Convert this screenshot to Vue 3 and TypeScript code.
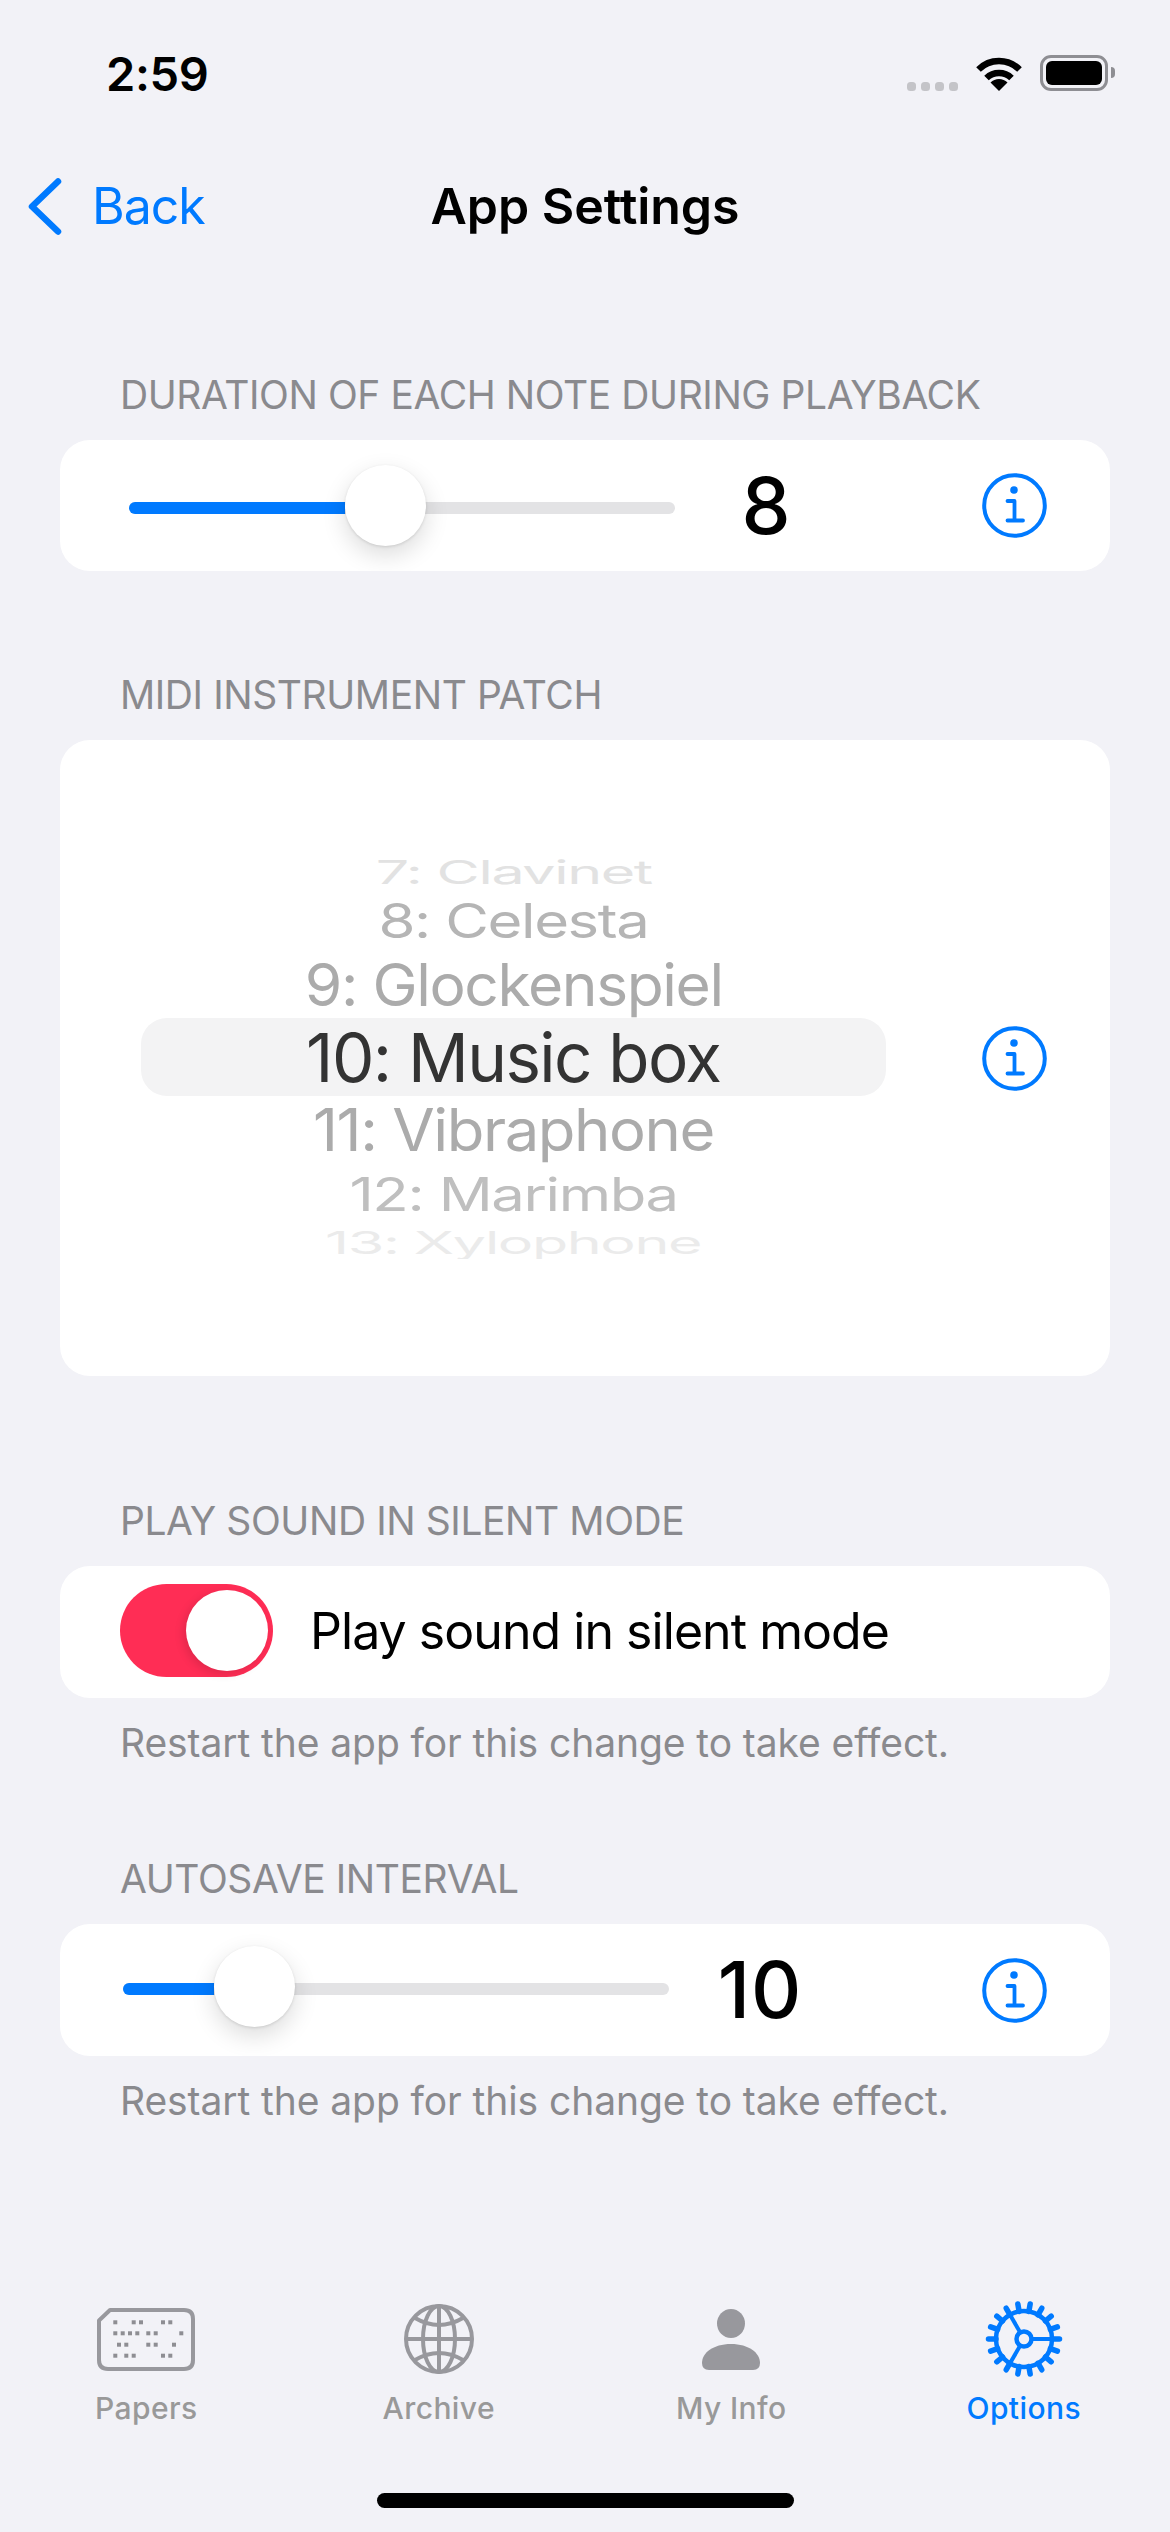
<script setup lang="ts">
interface PickerRow { label: string; sx: number; sy: number; color: string; h: number; sel?: boolean; clip?: boolean }
const rows: PickerRow[] = [
  { label: '6: Harpsichord', sx: 0.87, sy: 0.4, color: '#efefef', h: 9, clip: true },
  { label: '7: Clavinet', sx: 0.87, sy: 0.48, color: '#e2e2e2', h: 37 },
  { label: '8: Celesta', sx: 0.88, sy: 0.7, color: '#b5b5b5', h: 60 },
  { label: '9: Glockenspiel', sx: 0.89, sy: 0.86, color: '#ababab', h: 68 },
  { label: '10: Music box', sx: 0.99, sy: 1, color: '#333333', h: 78, sel: true },
  { label: '11: Vibraphone', sx: 0.905, sy: 0.86, color: '#ababab', h: 68 },
  { label: '12: Marimba', sx: 0.88, sy: 0.68, color: '#bfbfbf', h: 60 },
  { label: '13: Xylophone', sx: 0.87, sy: 0.46, color: '#ebebeb', h: 35 },
]
const paperDots: [number, number][] = [
  ...[18.3, 36.7, 44, 66, 73.3].map((x): [number, number] => [x, 14.3]),
  ...[18.3, 25.7, 33, 40.3, 51.3, 58.7, 84.3].map((x): [number, number] => [x, 25.3]),
  ...[22, 29.3, 51.3, 58.7, 77].map((x): [number, number] => [x, 36.7]),
  ...[18.3, 29.3, 36.7, 66, 73.3].map((x): [number, number] => [x, 47.7]),
]
const teeth = Array.from({ length: 18 }, (_, i) => i * 20)
</script>

<template>
  <div class="screen">
    <div class="status">
      <span class="time">2:59</span>
      <div class="status-right">
        <div class="signal"><i></i><i></i><i></i><i></i></div>
        <svg class="wifi" width="48" height="36" viewBox="0 0 48 36">
          <path d="M3.5 14.5A29 29 0 0 1 44.500 14.500" fill="none" stroke="#000" stroke-width="6.500" />
          <path d="M11.500 23A18 18 0 0 1 36.500 23" fill="none" stroke="#000" stroke-width="6.500" />
          <path d="M24 36L15.500 27.500A12 12 0 0 1 32.500 27.500Z" fill="#000" />
        </svg>
        <div class="battery"><div class="battery-fill"></div></div>
        <div class="battery-nub"></div>
      </div>
    </div>

    <div class="nav">
      <div class="back">
        <svg width="36" height="57" viewBox="0 0 36 57">
          <path d="M31 3.500L5 28.500L31 53.500" fill="none" stroke="#007aff" stroke-width="6.500" stroke-linecap="round" stroke-linejoin="round" />
        </svg>
        <span>Back</span>
      </div>
      <div class="title">App Settings</div>
    </div>

    <div class="label first">DURATION OF EACH NOTE DURING PLAYBACK</div>
    <div class="card slider-card one">
      <div class="slider">
        <div class="track"></div>
        <div class="fill" style="width: 216px"></div>
        <div class="thumb" style="left: 216px"></div>
      </div>
      <div class="value">8</div>
      <svg class="info" width="65" height="65" viewBox="0 0 65 65">
        <circle cx="32.500" cy="32.500" r="30.300" fill="none" stroke="#007aff" stroke-width="4" />
        <circle cx="32" cy="17" r="3.800" fill="#007aff" />
        <path d="M25.500 28H32.500V47.500M25.500 47.500H41" fill="none" stroke="#007aff" stroke-width="3.800" stroke-linecap="round" stroke-linejoin="round" />
      </svg>
    </div>

    <div class="label gap-a">MIDI INSTRUMENT PATCH</div>
    <div class="card picker-card">
      <div class="picker">
        <div
          v-for="r in rows"
          :key="r.label"
          class="row"
          :class="{ sel: r.sel, clip: r.clip }"
          :style="{ height: r.h + 'px' }"
        >
          <span :style="{ color: r.color, transform: `scale(${r.sx}, ${r.sy})` }">{{ r.label }}</span>
        </div>
      </div>
      <svg class="info" width="65" height="65" viewBox="0 0 65 65">
        <circle cx="32.500" cy="32.500" r="30.300" fill="none" stroke="#007aff" stroke-width="4" />
        <circle cx="32" cy="17" r="3.800" fill="#007aff" />
        <path d="M25.500 28H32.500V47.500M25.500 47.500H41" fill="none" stroke="#007aff" stroke-width="3.800" stroke-linecap="round" stroke-linejoin="round" />
      </svg>
    </div>

    <div class="label gap-b">PLAY SOUND IN SILENT MODE</div>
    <div class="card toggle-card">
      <div class="toggle"><div class="knob"></div></div>
      <span class="toggle-text">Play sound in silent mode</span>
    </div>
    <div class="footnote">Restart the app for this change to take effect.</div>

    <div class="label gap-c">AUTOSAVE INTERVAL</div>
    <div class="card slider-card two">
      <div class="slider">
        <div class="track"></div>
        <div class="fill" style="width: 91px"></div>
        <div class="thumb" style="left: 91px"></div>
      </div>
      <div class="value">10</div>
      <svg class="info" width="65" height="65" viewBox="0 0 65 65">
        <circle cx="32.500" cy="32.500" r="30.300" fill="none" stroke="#007aff" stroke-width="4" />
        <circle cx="32" cy="17" r="3.800" fill="#007aff" />
        <path d="M25.500 28H32.500V47.500M25.500 47.500H41" fill="none" stroke="#007aff" stroke-width="3.800" stroke-linecap="round" stroke-linejoin="round" />
      </svg>
    </div>
    <div class="footnote">Restart the app for this change to take effect.</div>

    <div class="tabs">
      <div class="tab">
        <div class="tab-icon">
          <svg width="98" height="63" viewBox="0 0 98 63">
            <path d="M13 2H87Q96 2 96 11V52Q96 61 87 61H11Q2 61 2 52V12.500Z" fill="none" stroke="#98989d" stroke-width="4" stroke-linejoin="round" />
            <rect v-for="(d, i) in paperDots" :key="i" :x="d[0] - 2" :y="d[1] - 2" width="4" height="4" fill="#8e8e93" />
          </svg>
        </div>
        <span class="tab-label">Papers</span>
      </div>
      <div class="tab">
        <div class="tab-icon">
          <svg width="70" height="70" viewBox="-35 -35 70 70" fill="none" stroke="#98989d" stroke-width="4">
            <circle r="33" />
            <ellipse rx="16" ry="33" />
            <path d="M0 -33V33M-33 0H33" />
            <path d="M-24 -21Q0 -7 24 -21M-24 21Q0 7 24 21" />
          </svg>
        </div>
        <span class="tab-label">Archive</span>
      </div>
      <div class="tab">
        <div class="tab-icon">
          <svg width="58" height="61" viewBox="0 0 58 61" fill="#98989d">
            <ellipse cx="29" cy="14.500" rx="14" ry="14.500" />
            <path d="M0 54C0 44 11 35 29 35C47 35 58 44 58 54Q58 61 51 61H7Q0 61 0 54Z" />
          </svg>
        </div>
        <span class="tab-label">My Info</span>
      </div>
      <div class="tab active">
        <div class="tab-icon">
          <svg width="78" height="78" viewBox="-39 -39 78 78" fill="none" stroke="#007aff">
            <circle r="28" stroke-width="4.500" />
            <line v-for="a in teeth" :key="a" x1="28" y1="0" x2="35.500" y2="0" stroke-width="5.500" stroke-linecap="round" :transform="`rotate(${a})`" />
            <circle r="7.500" stroke-width="4.500" />
            <line v-for="a in [0, 120, 240]" :key="'s' + a" x1="9" y1="0" x2="28" y2="0" stroke-width="4" :transform="`rotate(${a})`" />
          </svg>
        </div>
        <span class="tab-label">Options</span>
      </div>
    </div>
    <div class="home"></div>
  </div>
</template>

<style>
html, body { margin: 0; background: #f2f2f7; }
</style>

<style scoped>
.screen {
  width: 1170px;
  height: 2532px;
  background: #f2f2f7;
  display: flex;
  flex-direction: column;
  font-family: Inter, "Liberation Sans", sans-serif;
  overflow: hidden;
  color: #000;
}
.status {
  height: 150px;
  box-sizing: border-box;
  padding: 48px 55px 0 106px;
  display: flex;
  justify-content: space-between;
  align-items: flex-start;
}
.time { font-size: 47px; font-weight: 600; line-height: 52px; letter-spacing: -0.4px; }
.status-right { display: flex; align-items: flex-start; padding-top: 7px; }
.signal { display: flex; gap: 5px; margin-top: 27px; margin-right: 17px; }
.signal i { width: 9px; height: 9px; border-radius: 3.500px; background: #c4c4c8; display: block; }
.battery {
  width: 68px;
  height: 36px;
  margin-left: 17px;
  box-sizing: border-box;
  border: 3.500px solid #8e8e93;
  border-radius: 11px;
  padding: 3px;
}
.battery-fill { width: 100%; height: 100%; background: #000; border-radius: 6px; }
.battery-nub { width: 4px; height: 11px; margin: 12px 0 0 3px; background: #8e8e93; border-radius: 0 4px 4px 0; }
.nav { height: 70px; margin-top: 21px; position: relative; display: flex; align-items: center; justify-content: center; flex: none; }
.back { position: absolute; left: 27px; top: 7px; display: flex; align-items: center; gap: 29px; color: #007aff; font-size: 50px; line-height: 57px; letter-spacing: -1px; }
.title { font-size: 50px; font-weight: 600; line-height: 70px; letter-spacing: -0.05px; }
.label { font-size: 39px; line-height: 48px; color: #8a8a8e; padding-left: 120px; margin-bottom: 21px; white-space: nowrap; letter-spacing: -0.42px; flex: none; }
.first { margin-top: 130px; }
.gap-a { margin-top: 100px; }
.gap-b { margin-top: 121px; }
.gap-c { margin-top: 88px; }
.card {
  margin: 0 60px;
  width: 1050px;
  background: #fff;
  border-radius: 30px;
  overflow: hidden;
  display: flex;
  align-items: center;
  box-sizing: border-box;
  flex: none;
}
.slider-card { height: 131px; }
.slider-card.one { padding-left: 69px; }
.slider-card.two { padding-left: 63px; height: 132px; }
.slider { position: relative; width: 546px; height: 81px; flex: none; }
.two .slider { top: -3.500px; }
.track { position: absolute; left: 0; right: 0; top: 37px; height: 12px; background: #e3e3e5; border-radius: 6px; }
.fill { position: absolute; left: 0; top: 37px; height: 12px; background: #007aff; border-radius: 6px 0 0 6px; }
.thumb {
  position: absolute;
  top: 0;
  width: 81px;
  height: 81px;
  border-radius: 50%;
  background: #fff;
  box-shadow: 0 9px 24px rgba(0, 0, 0, 0.14), 0 1px 3px rgba(0, 0, 0, 0.12);
}
.value { width: 176px; text-align: center; font-size: 78px; line-height: 80px; font-weight: 450; flex: none; }
.one .value { padding-left: 6px; box-sizing: border-box; }
.two .value { width: 182px; letter-spacing: 1px; }
.info { flex: none; margin-left: auto; margin-right: 63px; }
.picker-card { height: 636px; padding-left: 81px; }
.picker { width: 745px; height: 415px; margin-bottom: 13px; display: flex; flex-direction: column; overflow: hidden; flex: none; }
.row { display: flex; justify-content: center; align-items: center; font-size: 68px; letter-spacing: -1.6px; flex: none; }
.row span { display: inline-block; line-height: 78px; white-space: nowrap; }
.row.sel { background: #f3f3f4; border-radius: 26px; }
.row.clip { overflow: hidden; align-items: flex-end; }
.toggle-card { height: 132px; padding-left: 60px; }
.toggle { width: 153px; height: 93px; border-radius: 47px; background: #ff2d55; position: relative; flex: none; margin-bottom: 3px; }
.knob { position: absolute; right: 5px; top: 6px; width: 82px; height: 81px; border-radius: 50%; background: #fff; box-shadow: -3px 3px 10px rgba(0, 0, 0, 0.12); }
.toggle-text { margin-left: 37px; font-size: 50px; line-height: 60px; letter-spacing: -0.95px; margin-bottom: 2px; }
.footnote { font-size: 39px; line-height: 48px; color: #8a8a8e; padding-left: 120px; margin-top: 21px; white-space: nowrap; letter-spacing: -0.08px; flex: none; }
.tabs { margin-top: auto; display: flex; flex: none; }
.tab { width: 292.500px; display: flex; flex-direction: column; align-items: center; color: #999; }
.tab.active { color: #007aff; }
.tab-icon { height: 80px; display: flex; align-items: center; justify-content: center; }
.tab-label { font-size: 30px; font-weight: 500; line-height: 36px; margin-top: 11px; letter-spacing: 0.4px; }
.home { width: 417px; height: 15px; border-radius: 8px; background: #000; align-self: center; margin: 67px 0 24px; flex: none; }
</style>
